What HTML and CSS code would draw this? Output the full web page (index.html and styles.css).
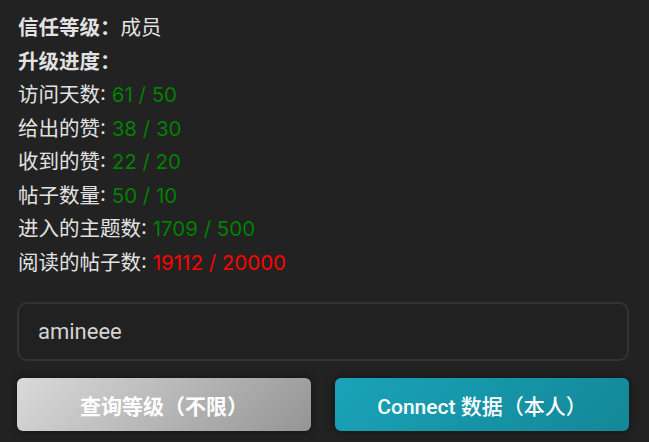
FILE: index.html
```html
<html>

<head>
  <title>信任等级</title>
  <link rel="stylesheet" href="styles.css">
</head>

<body>
  <div class="panel">
    <div class="stats">
      <div class="row"><b>信任等级：</b>成员</div>
      <div class="row"><b>升级进度：</b></div>
      <div class="row">访问天数: <span class="ok">61 / 50</span></div>
      <div class="row">给出的赞: <span class="ok">38 / 30</span></div>
      <div class="row">收到的赞: <span class="ok">22 / 20</span></div>
      <div class="row">帖子数量: <span class="ok">50 / 10</span></div>
      <div class="row">进入的主题数: <span class="ok">1709 / 500</span></div>
      <div class="row">阅读的帖子数: <span class="bad">19112 / 20000</span></div>
    </div>

    <input class="username" type="text" value="amineee">

    <div class="actions">
      <button class="button grey">查询等级（不限）</button>
      <button class="button teal">Connect 数据（本人）</button>
    </div>
  </div>
</body>

</html>
```

FILE: styles.css
```css
body {
  margin: 0;
  background: #222222;
  font-family: 'Inter', 'Noto Sans CJK SC', sans-serif;
  color: #e2e2e2;
}

.panel {
  padding: 11px 20px 0 17px;
}

.stats {
  padding-left: 1px;
}

.row {
  font-size: 20.5px;
  line-height: 33.5px;
}

.row b {
  font-weight: bold;
}

.ok {
  color: #008000;
}

.bad {
  color: #ff0000;
}

.username {
  display: block;
  box-sizing: border-box;
  width: 100%;
  height: 59px;
  margin-top: 23px;
  padding: 0 19px;
  border: 2px solid #333333;
  border-radius: 10px;
  background: #212121;
  color: #d4d4d4;
  font-family: 'Roboto', 'Noto Sans CJK SC', sans-serif;
  font-size: 22px;
  outline: none;
}

.actions {
  display: flex;
  gap: 24px;
  margin-top: 17px;
}

.button {
  flex: 1;
  height: 53px;
  border: none;
  border-radius: 6px;
  color: #ffffff;
  font-family: 'Roboto', 'Noto Sans CJK SC', sans-serif;
  font-size: 21px;
  font-weight: bold;
  cursor: pointer;
  box-shadow: 0 0 10px rgb(0 0 0 / 45%);
}

.grey {
  background: linear-gradient(135deg, #dadada, #959595);
}

.teal {
  font-weight: 500;
  background: linear-gradient(135deg, #19a3b9, #138797);
}
```
